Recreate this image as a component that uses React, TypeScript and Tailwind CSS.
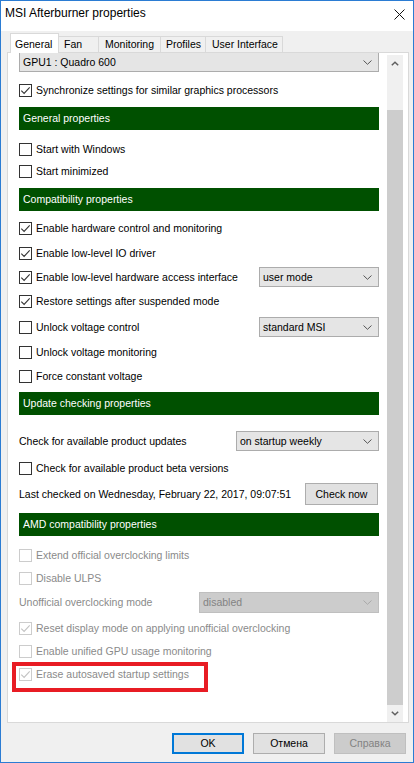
import React from "react";

function Check({ checked, disabled }: { checked?: boolean; disabled?: boolean }) {
  return (
    <span
      className={
        disabled
          ? "relative block w-[13px] h-[13px] shrink-0 border border-[#cccccc] bg-white"
          : "relative block w-[13px] h-[13px] shrink-0 border border-[#333333] bg-white"
      }
    >
      {checked && (
        <svg className="absolute left-0 top-0" width="11" height="11" viewBox="0 0 11 11">
          <path
            d="M1.3 5.6 L4.1 8.4 L9.7 2.4"
            fill="none"
            stroke={disabled ? "#c2c2c2" : "#333333"}
            strokeWidth="1.1"
          />
        </svg>
      )}
    </span>
  );
}

function Chevron({ color = "#555555" }: { color?: string }) {
  return (
    <svg width="9" height="5" viewBox="0 0 9 5" className="shrink-0">
      <path d="M0.5 0.5 L4.5 4.3 L8.5 0.5" fill="none" stroke={color} strokeWidth="1" />
    </svg>
  );
}

function Row({
  label,
  checked,
  disabled,
  className = "",
  children,
}: {
  label: string;
  checked?: boolean;
  disabled?: boolean;
  className?: string;
  children?: React.ReactNode;
}) {
  return (
    <div className={"relative flex items-center justify-between h-[20px] " + className}>
      <div className="flex items-center gap-[4px]">
        <Check checked={checked} disabled={disabled} />
        <span className={disabled ? "leading-none text-[#8a8a8a]" : "leading-none"}>{label}</span>
      </div>
      {children}
    </div>
  );
}

function Header({ title, className = "" }: { title: string; className?: string }) {
  return (
    <div className={"h-[23px] bg-[#005000] text-white flex items-center pl-[4px] " + className}>
      <span className="leading-none">{title}</span>
    </div>
  );
}

export default function App() {
  return (
    <div className="w-[414px] h-[763px] border border-[#2b7cd3] bg-[#f0f0f0] flex flex-col overflow-hidden font-['Liberation_Sans',sans-serif] text-[10.5px] text-black">
      {/* Title bar */}
      <div className="h-[30px] shrink-0 bg-white flex items-start justify-between pl-[4px] pr-[8px]">
        <span className="mt-[5px] text-[12px] leading-[14px]">MSI Afterburner properties</span>
        <svg className="mt-[8px]" width="11" height="11" viewBox="0 0 11 11">
          <path d="M0.5 0.5 L10.5 10.5 M10.5 0.5 L0.5 10.5" stroke="#111111" strokeWidth="1" />
        </svg>
      </div>

      {/* Tabs */}
      <div className="h-[21px] shrink-0 flex items-end pl-[9px]">
        <div className="relative z-10 mb-[-1px] h-[20px] w-[49px] bg-white border-l border-t border-r border-[#d9d9d9] flex items-start pl-[4px] pt-[5px]">
          <span className="leading-none">General</span>
        </div>
        <div className="h-[16px] w-[40px] border-t border-r border-[#d9d9d9] flex items-center pl-[5px]">
          <span className="leading-none">Fan</span>
        </div>
        <div className="h-[16px] w-[62px] border-t border-r border-[#d9d9d9] flex items-center pl-[6px]">
          <span className="leading-none">Monitoring</span>
        </div>
        <div className="h-[16px] w-[45px] border-t border-r border-[#d9d9d9] flex items-center pl-[5px]">
          <span className="leading-none">Profiles</span>
        </div>
        <div className="h-[16px] w-[77px] border-t border-r border-[#d9d9d9] flex items-center pl-[6px]">
          <span className="leading-none">User Interface</span>
        </div>
      </div>

      {/* Panel */}
      <div className="ml-[6px] w-[402px] h-[671px] shrink-0 border border-[#d9d9d9] bg-white flex overflow-hidden">
        {/* Content */}
        <div className="w-[379px] pl-[11px] pr-[8px] flex flex-col overflow-hidden">
          <div className="h-[19px] shrink-0 border-l border-r border-b border-[#acacac] bg-[#e5e5e5] flex items-center justify-between pl-[3px] pr-[6px]">
            <span className="leading-none">GPU1 : Quadro 600</span>
            <Chevron />
          </div>

          <Row className="mt-[8px]" label="Synchronize settings for similar graphics processors" checked />

          <Header className="mt-[7px]" title="General properties" />
          <Row className="mt-[9px]" label="Start with Windows" />
          <Row className="mt-[2px]" label="Start minimized" />

          <Header className="mt-[7px]" title="Compatibility properties" />
          <Row className="mt-[7px]" label="Enable hardware control and monitoring" checked />
          <Row className="mt-[5px]" label="Enable low-level IO driver" checked />
          <Row className="mt-[4px]" label="Enable low-level hardware access interface" checked>
            <div className="w-[120px] h-[20px] border border-[#acacac] bg-[#e5e5e5] flex items-center justify-between pl-[3px] pr-[6px]">
              <span className="leading-none">user mode</span>
              <Chevron />
            </div>
          </Row>
          <Row className="mt-[4px]" label="Restore settings after suspended mode" checked />
          <Row className="mt-[6px]" label="Unlock voltage control">
            <div className="w-[120px] h-[20px] border border-[#acacac] bg-[#e5e5e5] flex items-center justify-between pl-[3px] pr-[6px]">
              <span className="leading-none">standard MSI</span>
              <Chevron />
            </div>
          </Row>
          <Row className="mt-[5px]" label="Unlock voltage monitoring" />
          <Row className="mt-[4px]" label="Force constant voltage" />

          <Header className="mt-[6px]" title="Update checking properties" />
          <div className="mt-[16px] h-[20px] flex items-center justify-between">
            <span className="leading-none">Check for available product updates</span>
            <div className="w-[143px] h-[20px] border border-[#acacac] bg-[#e5e5e5] flex items-center justify-between pl-[3px] pr-[6px]">
              <span className="leading-none">on startup weekly</span>
              <Chevron />
            </div>
          </div>
          <Row className="mt-[7px]" label="Check for available product beta versions" />
          <div className="mt-[5px] h-[22px] flex items-center justify-between">
            <span className="leading-none">Last checked on Wednesday, February 22, 2017, 09:07:51</span>
            <div className="mr-[1px] w-[73px] h-[22px] border border-[#adadad] bg-[#e1e1e1] flex items-center justify-center">
              <span className="leading-none">Check now</span>
            </div>
          </div>

          <Header className="mt-[8px]" title="AMD compatibility properties" />
          <Row className="mt-[9px]" label="Extend official overclocking limits" disabled />
          <Row className="mt-[3px]" label="Disable ULPS" disabled />
          <div className="mt-[4px] h-[21px] flex items-center justify-between">
            <span className="leading-none text-[#8a8a8a]">Unofficial overclocking mode</span>
            <div className="w-[180px] h-[21px] border border-[#bfbfbf] bg-[#cccccc] flex items-center justify-between pl-[3px] pr-[6px]">
              <span className="leading-none text-[#838383]">disabled</span>
              <Chevron color="#a8a8a8" />
            </div>
          </div>
          <Row className="mt-[5px]" label="Reset display mode on applying unofficial overclocking" checked disabled />
          <Row className="mt-[3px]" label="Enable unified GPU usage monitoring" disabled />
          <Row className="mt-[3px]" label="Erase autosaved startup settings" checked disabled>
            <div className="absolute left-[-7px] top-[-2px] w-[196px] h-[30px] border-4 border-[#e81c24]" />
          </Row>
        </div>

        {/* Scrollbar */}
        <div className="mt-[2px] w-[16px] bg-[#f0f0f0] flex flex-col">
          <div className="h-[17px] flex items-center justify-center">
            <svg width="8" height="5" viewBox="0 0 8 5">
              <path d="M0.8 4.3 L4 1.2 L7.2 4.3" fill="none" stroke="#606060" strokeWidth="1.5" />
            </svg>
          </div>
          <div className="h-[38px]" />
          <div className="h-[595px] bg-[#cdcdcd]" />
          <div className="h-[17px] flex items-center justify-center">
            <svg width="8" height="5" viewBox="0 0 8 5">
              <path d="M0.8 0.7 L4 3.8 L7.2 0.7" fill="none" stroke="#606060" strokeWidth="1.5" />
            </svg>
          </div>
        </div>
      </div>

      {/* Buttons */}
      <div className="mt-[10px] h-[21px] shrink-0 flex justify-end gap-[9px] pr-[7px]">
        <div className="w-[72px] h-[21px] border-2 border-[#0078d7] bg-[#e1e1e1] flex items-center justify-center">
          <span className="leading-none">OK</span>
        </div>
        <div className="w-[72px] h-[21px] border border-[#adadad] bg-[#e1e1e1] flex items-center justify-center">
          <span className="leading-none">Отмена</span>
        </div>
        <div className="w-[72px] h-[21px] border border-[#bfbfbf] bg-[#cccccc] flex items-center justify-center">
          <span className="leading-none text-[#838383]">Справка</span>
        </div>
      </div>
    </div>
  );
}
